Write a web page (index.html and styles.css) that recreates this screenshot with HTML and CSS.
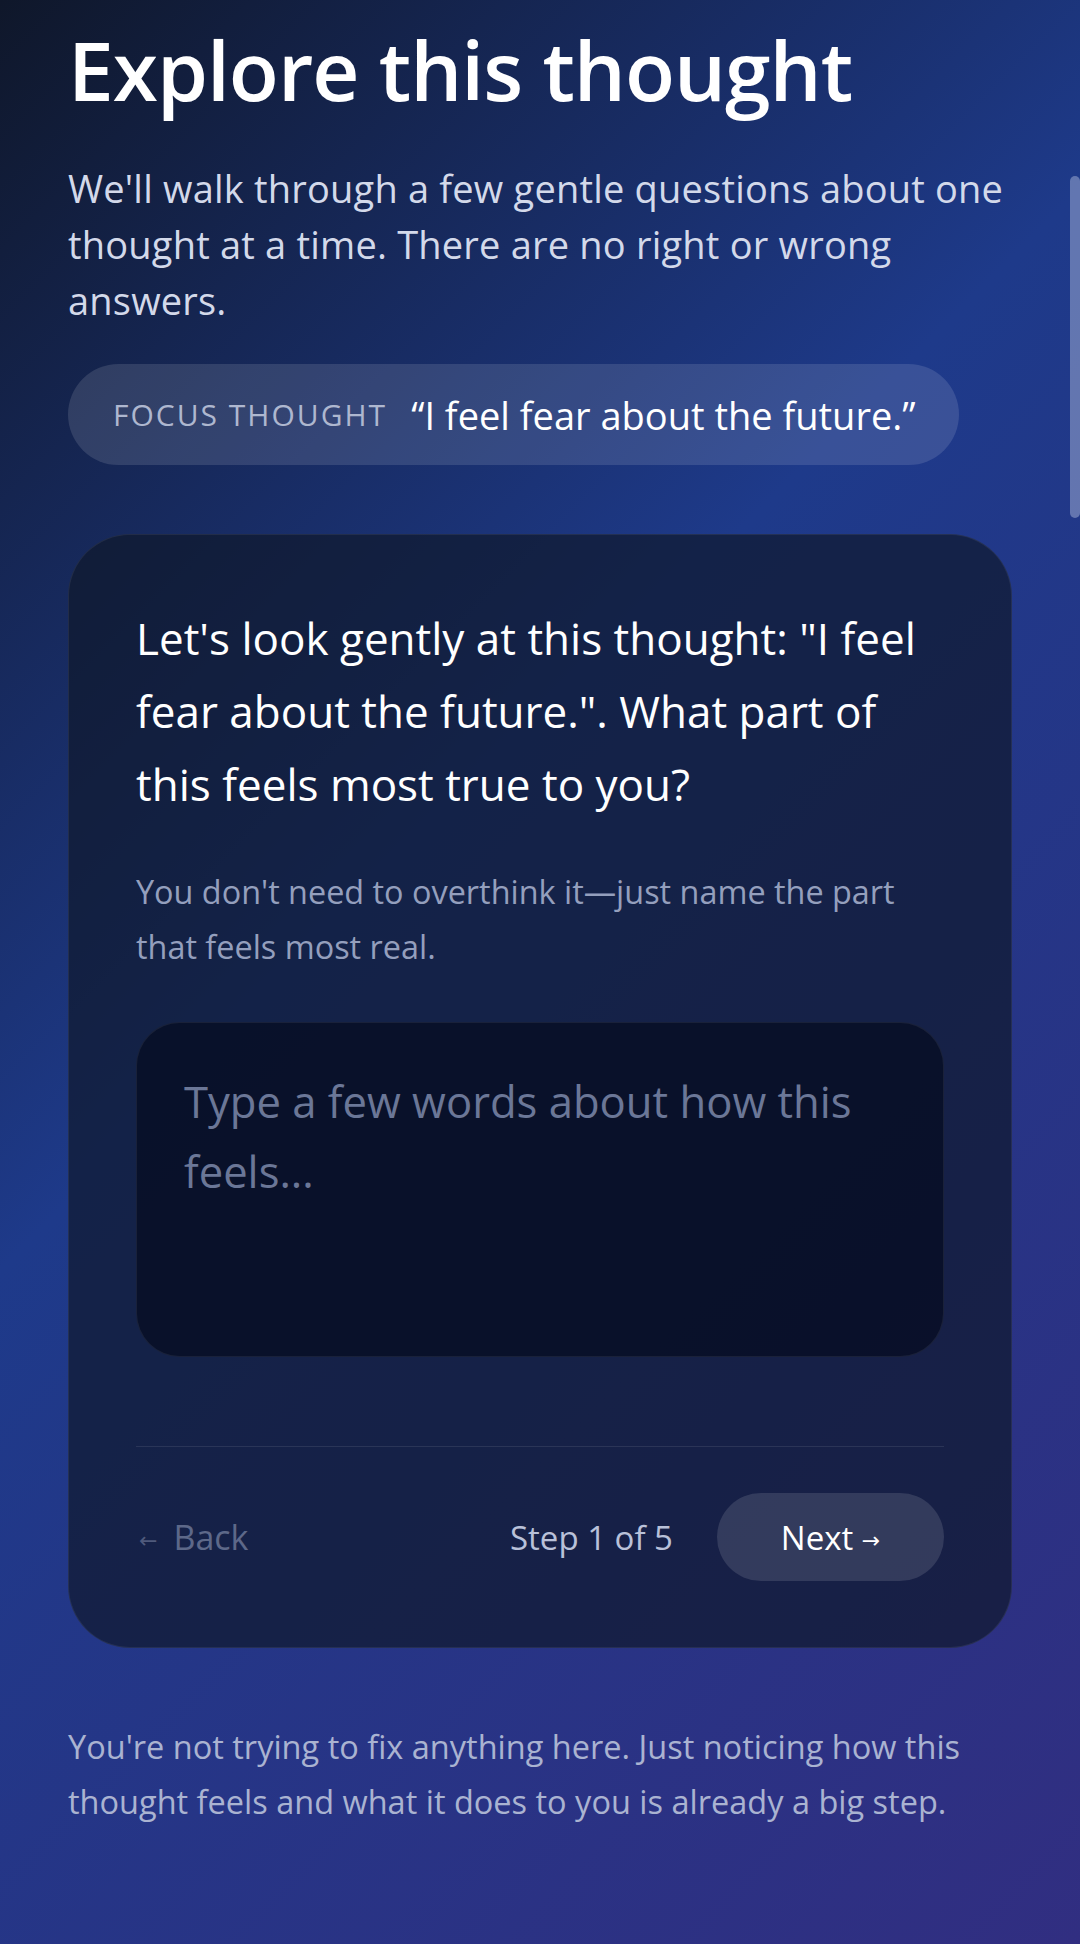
FILE: index.html
```html
<!DOCTYPE html>
<html lang="en">
<head>
<meta charset="utf-8">
<title>Explore this thought</title>
<link rel="stylesheet" href="styles.css">
</head>
<body>
<main class="page">
  <h1 class="title">Explore this thought</h1>
  <p class="intro">We'll walk through a few gentle questions about one thought at a time. There are no right or wrong answers.</p>
  <div class="focus">
    <span class="focus-label">FOCUS THOUGHT</span>
    <span class="focus-text">“I feel fear about the future.”</span>
  </div>
  <section class="card">
    <h2 class="question">Let's look gently at this thought: "I feel fear about the future.". What part of this feels most true to you?</h2>
    <p class="hint">You don't need to overthink it—just name the part that feels most real.</p>
    <textarea class="answer" placeholder="Type a few words about how this feels..."></textarea>
    <div class="nav">
      <button class="back" type="button"><span class="arrow arrow-back">←</span>Back</button>
      <div class="nav-right">
        <span class="step">Step 1 of 5</span>
        <button class="next" type="button">Next <span class="arrow">→</span></button>
      </div>
    </div>
  </section>
  <p class="note">You're not trying to fix anything here. Just noticing how this thought feels and what it does to you is already a big step.</p>
</main>
<div class="scrollbar"></div>
</body>
</html>
```

FILE: styles.css
```css
html {
  background: linear-gradient(135deg, #0f172a 0%, #1e3a8a 45%, #312e81 100%);
  min-height: 100%;
}
body {
  margin: 0;
  min-height: 1944px;
  font-family: "Open Sans", "Noto Sans", sans-serif;
  color: #ffffff;
  background: linear-gradient(135deg, #0f172a 0%, #1e3a8a 42%, #312e81 100%);
}
.page {
  padding: 25px 68px 80px 68px;
  display: flex;
  flex-direction: column;
}
.title {
  margin: 0;
  font-size: 82px;
  line-height: 89px;
  font-weight: 600;
  letter-spacing: -1px;
  color: #ffffff;
}
.intro {
  margin: 46px 0 0 0;
  font-size: 38px;
  line-height: 56px;
  letter-spacing: 0.2px;
  color: #d3d9ea;
  max-width: 944px;
}
.focus {
  margin-top: 36px;
  align-self: flex-start;
  display: flex;
  align-items: center;
  gap: 24px;
  height: 101px;
  padding: 0 44px 0 45px;
  border-radius: 51px;
  background: rgba(255, 255, 255, 0.12);
}
.focus-label {
  font-size: 30px;
  letter-spacing: 2px;
  color: #aeb7cf;
}
.focus-text {
  font-size: 38px;
  font-weight: 500;
  color: #ffffff;
}
.card {
  margin-top: 69px;
  padding: 67px 67px 66px 67px;
  border-radius: 62px;
  background: rgba(15, 23, 42, 0.68);
  border: 1px solid rgba(255, 255, 255, 0.07);
  display: flex;
  flex-direction: column;
}
.question {
  margin: 0;
  font-size: 44px;
  line-height: 73px;
  font-weight: 500;
  color: #ffffff;
}
.hint {
  margin: 43px 0 0 0;
  font-size: 32.4px;
  line-height: 55px;
  color: #949fbd;
}
.answer {
  margin-top: 48px;
  height: 335px;
  box-sizing: border-box;
  padding: 43px 47px;
  border-radius: 44px;
  border: 1px solid rgba(255, 255, 255, 0.07);
  background: rgba(2, 6, 23, 0.6);
  font-family: inherit;
  font-size: 43.6px;
  line-height: 70px;
  color: #ffffff;
  resize: none;
  outline: none;
}
.answer::placeholder {
  color: #6b7797;
}
.nav {
  margin-top: 89px;
  padding-top: 46px;
  border-top: 1px solid rgba(255, 255, 255, 0.09);
  display: flex;
  align-items: center;
  justify-content: space-between;
}
.back {
  background: none;
  border: none;
  padding: 0 0 0 3px;
  font-family: inherit;
  font-size: 34px;
  color: #5d6889;
}
.arrow {
  font-size: 22px;
  font-family: "DejaVu Sans", sans-serif;
  vertical-align: 2px;
}
.arrow-back {
  margin-right: 16px;
  color: #4f5a7c;
}
.nav-right {
  display: flex;
  align-items: center;
  gap: 44px;
}
.step {
  font-size: 33px;
  color: #b9c1d9;
}
.next {
  height: 88px;
  width: 227px;
  border: none;
  border-radius: 44px;
  background: rgba(255, 255, 255, 0.12);
  font-family: inherit;
  font-size: 33px;
  font-weight: 500;
  color: #ffffff;
}
.note {
  margin: 71px 0 0 0;
  font-size: 32.5px;
  line-height: 55px;
  color: #aab3d1;
}
.scrollbar {
  position: fixed;
  top: 176px;
  right: 0;
  width: 10px;
  height: 342px;
  border-radius: 5px;
  background: rgba(200, 210, 235, 0.4);
}
```
